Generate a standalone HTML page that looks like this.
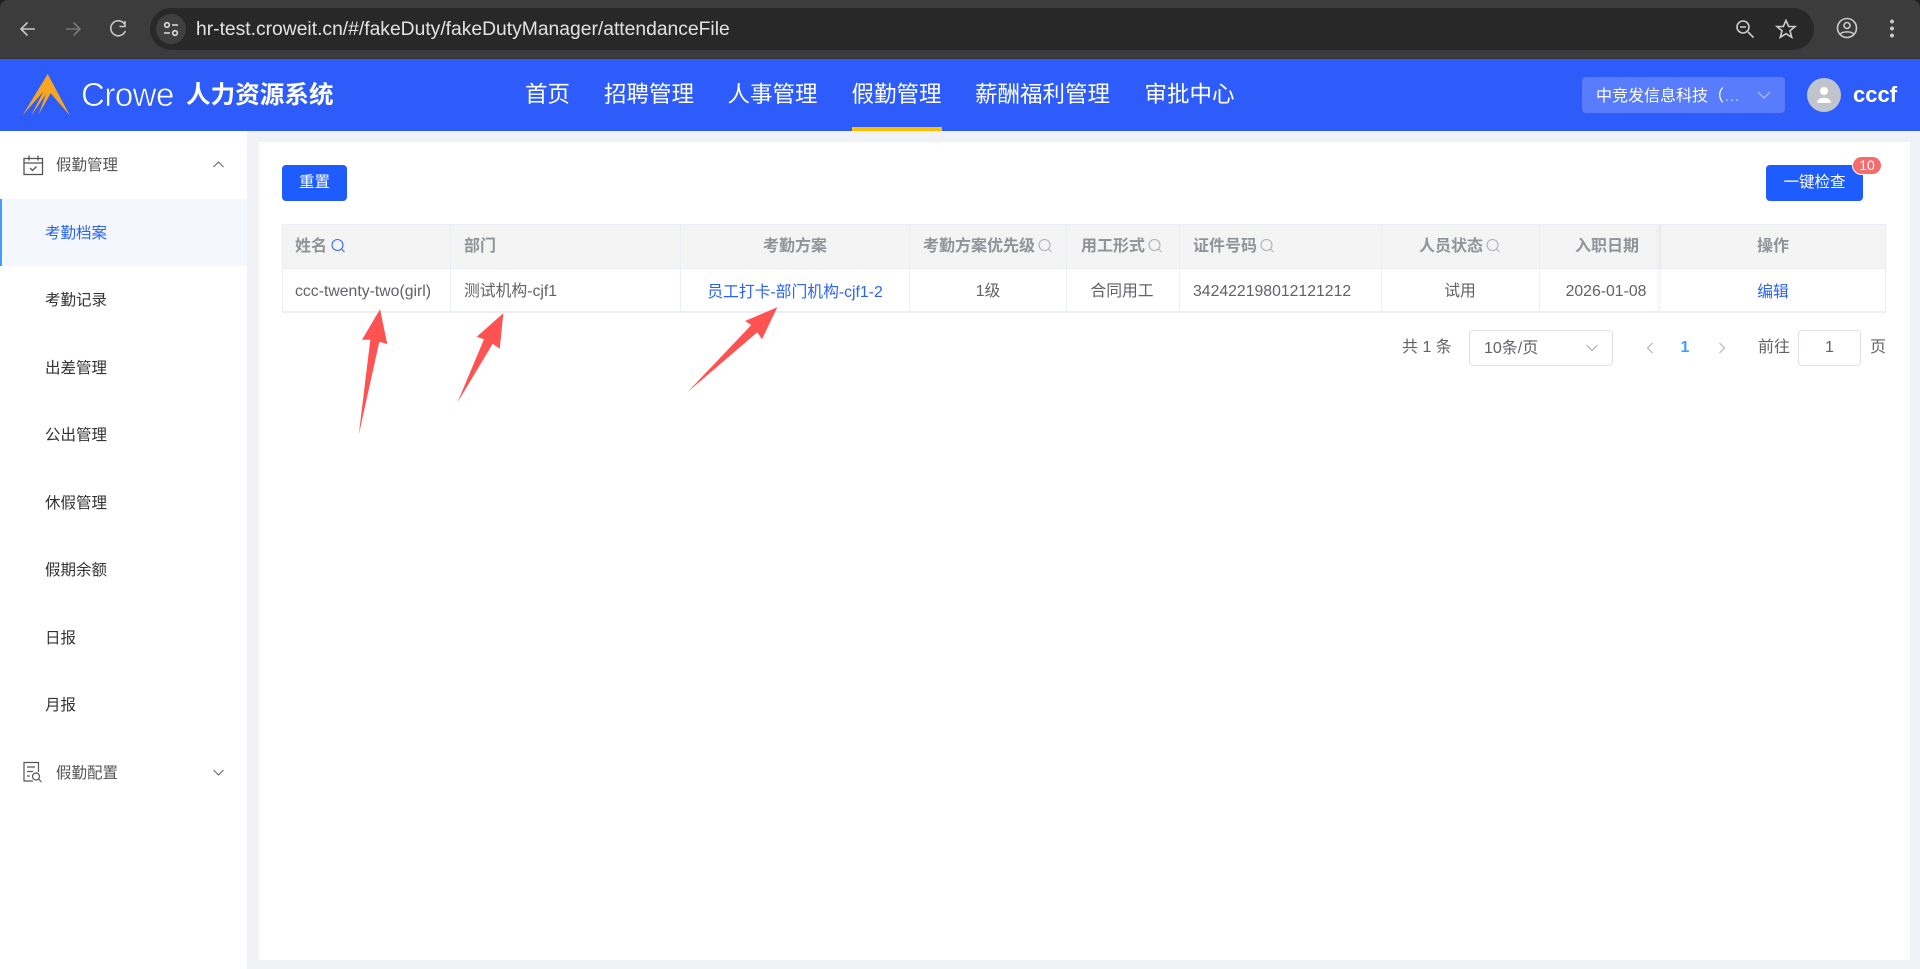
<!DOCTYPE html>
<html lang="zh-CN"><head><meta charset="utf-8"><title>考勤档案</title>
<style>
*{box-sizing:border-box}
html,body{margin:0;padding:0;width:1920px;height:969px;overflow:hidden;background:#f0f2f5;font-family:"Liberation Sans","Noto Sans CJK SC",sans-serif;font-size:16px;color:#606266}
.a{position:absolute}
.t{position:absolute;white-space:nowrap;line-height:24px}
.c{transform:translateX(-50%)}
.h{color:#909399;font-weight:700;font-size:16px;top:233px;margin-top:2px}
.r{color:#606266;font-size:15.8px;top:280px}
.m{color:#333;font-size:15.5px;left:45px}
.n{color:#fff;font-size:22.5px;top:81px;line-height:28px}
.v{position:absolute;top:224px;height:89px;width:1px;background:#ebeef5}
svg{position:absolute;display:block;overflow:visible}
</style></head><body>
<!-- browser chrome -->
<div class="a" style="left:0;top:0;width:1920px;height:59px;background:#1f1f1f"></div>
<div class="a" style="left:0;top:0;width:1920px;height:59px;background:#3c3c3c;border-bottom:1px solid #333;border-radius:8px 8px 0 0"></div>
<div class="a" style="left:150px;top:8px;width:1664px;height:42px;background:#282828;border-radius:21px"></div>
<div class="a" style="left:156px;top:14px;width:30px;height:30px;background:#3f3f3f;border-radius:50%"></div>
<svg style="left:0;top:0" width="1920" height="59" fill="none" stroke="#c7c7c7" stroke-width="1.6">
<path d="M35 29H21M27.500 22.500L21 29l6.500 6.500"/>
<path d="M66 29h14M73.500 22.500L80 29l-6.500 6.500" stroke="#777"/>
<path d="M124.500 24a7.500 7.500 0 1 0 .8 7" /><path d="M125 21v5.500h-5.500" />
<circle cx="167" cy="25" r="2.300" stroke="#ddd"/><path d="M172 25h6M164 33h6" stroke="#ddd"/><circle cx="175" cy="33" r="2.300" stroke="#ddd"/>
<circle cx="1743" cy="27" r="6" stroke="#ccc"/><path d="M1748 32l5.500 5.500M1740 27h6" stroke="#ccc"/>
<path d="M1786 20.500l2.700 6h6.300l-5 4.300 1.700 6.500-5.700-3.600-5.700 3.600 1.700-6.500-5-4.300h6.300z" stroke="#ccc"/>
<circle cx="1847" cy="28" r="9.500" stroke="#ccc"/><circle cx="1847" cy="25.500" r="3" stroke="#ccc"/><path d="M1840 34.500c2-3.500 12-3.500 14 0" stroke="#ccc"/>
<g fill="#c7c7c7" stroke="none"><circle cx="1892" cy="21.500" r="2"/><circle cx="1892" cy="28.500" r="2"/><circle cx="1892" cy="35.500" r="2"/></g>
</svg>
<div class="t" style="left:196px;top:17px;color:#e3e3e3;font-size:19.3px;line-height:26px">hr-test.croweit.cn/#/fakeDuty/fakeDutyManager/attendanceFile</div>
<!-- header -->
<div class="a" style="left:0;top:59px;width:1920px;height:72px;background:#2e5cfa"></div>
<svg style="left:0;top:0" width="100" height="130"><polygon fill="#f5a81f" points="47.700,74 70,115.700 50.700,93.300 38.300,115 46,94.300 31,115.700 43.300,91.700 22.700,115"/></svg>
<div class="t" style="left:81px;top:76px;color:#fff;font-size:33px;line-height:38px;letter-spacing:-.5px;-webkit-text-stroke:.6px #2e5cfa">Crowe</div>
<div class="t" style="left:186px;top:81px;color:#fff;font-size:24.600px;font-weight:700;line-height:30px">人力资源系统</div>
<div class="t n" style="left:525px">首页</div>
<div class="t n" style="left:604px">招聘管理</div>
<div class="t n" style="left:727.500px">人事管理</div>
<div class="t n" style="left:851.500px">假勤管理</div>
<div class="t n" style="left:975px">薪酬福利管理</div>
<div class="t n" style="left:1144.500px">审批中心</div>
<div class="a" style="left:852px;top:127px;width:90px;height:4px;background:#fbbf00"></div>
<div class="a" style="left:1582px;top:77px;width:203px;height:36px;background:#587cfb;border-radius:4px"></div>
<div class="t" style="left:1596px;top:85px;color:#fff;font-size:16px">中竞发信息科技（<span style="opacity:.6">…</span></div>
<svg style="left:1757px;top:91px" width="14" height="9" fill="none" stroke="#b5c4fa" stroke-width="1.200"><path d="M1 1l6 6 6-6"/></svg>
<div class="a" style="left:1807px;top:78px;width:34px;height:34px;border-radius:50%;background:#c0c4cc"></div>
<svg style="left:1807px;top:78px" width="34" height="34" fill="#fff"><circle cx="17" cy="13" r="4"/><path d="M10 25c0-7 14-7 14 0z"/></svg>
<div class="t" style="left:1853px;top:82px;color:#fff;font-size:22px;font-weight:700;line-height:26px">cccf</div>
<!-- sidebar -->
<div class="a" style="left:0;top:131px;width:247px;height:838px;background:#fff"></div>
<div class="a" style="left:0;top:199px;width:247px;height:67px;background:#f4f8fe;border-left:2px solid #409eff"></div>
<svg style="left:23px;top:155px" width="21" height="21" fill="none" stroke="#555" stroke-width="1.300"><rect x="1" y="3.500" width="18.500" height="16"/><path d="M1 8h18.500M6 .5v5M15 .5v5M7 13l2.500 2.500 4-4"/></svg>
<div class="t" style="left:56px;top:154px;color:#555;font-size:15.500px">假勤管理</div>
<svg style="left:213px;top:161px" width="11" height="7" fill="none" stroke="#666" stroke-width="1.100"><path d="M.5 6l5-5 5 5"/></svg>
<div class="t m" style="top:221.500px;color:#2b63f6">考勤档案</div>
<div class="t m" style="top:289px">考勤记录</div>
<div class="t m" style="top:356.500px">出差管理</div>
<div class="t m" style="top:424px">公出管理</div>
<div class="t m" style="top:492px">休假管理</div>
<div class="t m" style="top:559px">假期余额</div>
<div class="t m" style="top:627px">日报</div>
<div class="t m" style="top:694px">月报</div>
<svg style="left:23px;top:762px" width="21" height="21" fill="none" stroke="#555" stroke-width="1.200"><path d="M10 19H1V.5h14.500V10M4 5h8M4 9.500h6M4 14h3"/><circle cx="13" cy="14.500" r="3.500"/><path d="M15.500 17l3 3"/></svg>
<div class="t" style="left:56px;top:762px;color:#555;font-size:15.500px">假勤配置</div>
<svg style="left:213px;top:769px" width="11" height="7" fill="none" stroke="#666" stroke-width="1.100"><path d="M.5 1l5 5 5-5"/></svg>
<!-- card -->
<div class="a" style="left:259px;top:142px;width:1651px;height:818px;background:#fff"></div>
<div class="a" style="left:282px;top:165px;width:65px;height:36px;background:#1f5cff;border-radius:4px"></div>
<div class="t c" style="left:314.500px;top:171px;color:#fff;font-size:15.500px">重置</div>
<div class="a" style="left:1766px;top:165px;width:97px;height:36px;background:#1f5cff;border-radius:4px"></div>
<div class="t c" style="left:1814.500px;top:171px;color:#fff;font-size:15.500px">一键检查</div>
<div class="a" style="left:1852px;top:156px;width:30px;height:19px;background:#f56c6c;border-radius:10px;border:1px solid #fff"></div>
<div class="t c" style="left:1867px;top:156px;color:#fff;font-size:14px;line-height:19px">10</div>
<!-- table -->
<div class="a" style="left:282px;top:224px;width:1604px;height:45px;background:#f4f4f5;border-top:1px solid #ebeef5;border-bottom:1px solid #ebeef5"></div>
<div class="a" style="left:282px;top:311px;width:1604px;height:2px;background:#ebeef5"></div>
<div class="v" style="left:282px"></div><div class="v" style="left:450px"></div><div class="v" style="left:680px"></div><div class="v" style="left:909px"></div><div class="v" style="left:1066px"></div><div class="v" style="left:1179px"></div><div class="v" style="left:1381px"></div><div class="v" style="left:1539px"></div><div class="v" style="left:1885px"></div>
<div class="a" style="left:1655px;top:225px;width:6px;height:86px;background:linear-gradient(90deg,rgba(0,0,0,0),rgba(0,0,0,.045))"></div>
<div class="t h" style="left:295px">姓名</div>
<div class="t h" style="left:464px">部门</div>
<div class="t h c" style="left:795px">考勤方案</div>
<div class="t h" style="left:923px">考勤方案优先级</div>
<div class="t h" style="left:1081px">用工形式</div>
<div class="t h" style="left:1193px">证件号码</div>
<div class="t h" style="left:1419px">人员状态</div>
<div class="t h" style="left:1575px">入职日期</div>
<div class="t h c" style="left:1773px">操作</div>
<svg style="left:0;top:0" width="1920" height="300" fill="none" stroke="#aeb0b5" stroke-width="1.100">
<g stroke="#2f6bff"><circle cx="337.500" cy="245" r="5.500"/><path d="M341.500 249l3 3"/></g>
<circle cx="1044.500" cy="245" r="5.500"/><path d="M1048.500 249l3 3"/>
<circle cx="1154.500" cy="245" r="5.500"/><path d="M1158.500 249l3 3"/>
<circle cx="1266.500" cy="245" r="5.500"/><path d="M1270.500 249l3 3"/>
<circle cx="1492.500" cy="245" r="5.500"/><path d="M1496.500 249l3 3"/>
</svg>
<div class="t r" style="left:295px">ccc-twenty-two(girl)</div>
<div class="t r" style="left:464px">测试机构-cjf1</div>
<div class="t r c" style="left:795px;top:281px;color:#2b63f6">员工打卡-部门机构-cjf1-2</div>
<div class="t r c" style="left:988px">1级</div>
<div class="t r c" style="left:1122px">合同用工</div>
<div class="t r" style="left:1193px">342422198012121212</div>
<div class="t r c" style="left:1460px">试用</div>
<div class="t r c" style="left:1606px">2026-01-08</div>
<div class="t r c" style="left:1773px;top:281px;color:#2b63f6">编辑</div>
<!-- pagination -->
<div class="t" style="left:1402px;top:336px;font-size:16px">共 1 条</div>
<div class="a" style="left:1469px;top:330px;width:144px;height:36px;border:1px solid #dcdfe6;border-radius:4px;background:#fff"></div>
<div class="t" style="left:1484px;top:337px;font-size:16px">10条/页</div>
<svg style="left:1586px;top:344px" width="12" height="8" fill="none" stroke="#a8abb2" stroke-width="1.100"><path d="M.5 1l5.500 5.500L11.500 1"/></svg>
<svg style="left:1646px;top:342px" width="8" height="12" fill="none" stroke="#a8abb2" stroke-width="1"><path d="M6.500 1l-5 5 5 5"/></svg>
<div class="t c" style="left:1685px;top:336px;color:#409eff;font-weight:700;font-size:16px">1</div>
<svg style="left:1718px;top:342px" width="8" height="12" fill="none" stroke="#a8abb2" stroke-width="1"><path d="M1.500 1l5 5-5 5"/></svg>
<div class="t" style="left:1758px;top:336px;font-size:16px">前往</div>
<div class="a" style="left:1798px;top:330px;width:63px;height:36px;border:1px solid #dcdfe6;border-radius:4px;background:#fff"></div>
<div class="t c" style="left:1829.500px;top:336px;font-size:16px">1</div>
<div class="t" style="left:1870px;top:336px;font-size:16px">页</div>
<!-- annotation arrows -->
<svg style="left:0;top:0" width="1920" height="969" fill="#ff5353">
<polygon points="380,309.300 387.300,344 379.300,341.700 358.700,435 370.300,339.700 362,339.700"/>
<polygon points="503.300,313.300 499.700,348.700 492.700,343.700 457.300,402.700 484,339.300 476.700,336.700"/>
<polygon points="777.300,307.300 762,339.300 757.300,332.300 687.300,392.300 751.300,325 745,321"/>
</svg>
</body></html>
